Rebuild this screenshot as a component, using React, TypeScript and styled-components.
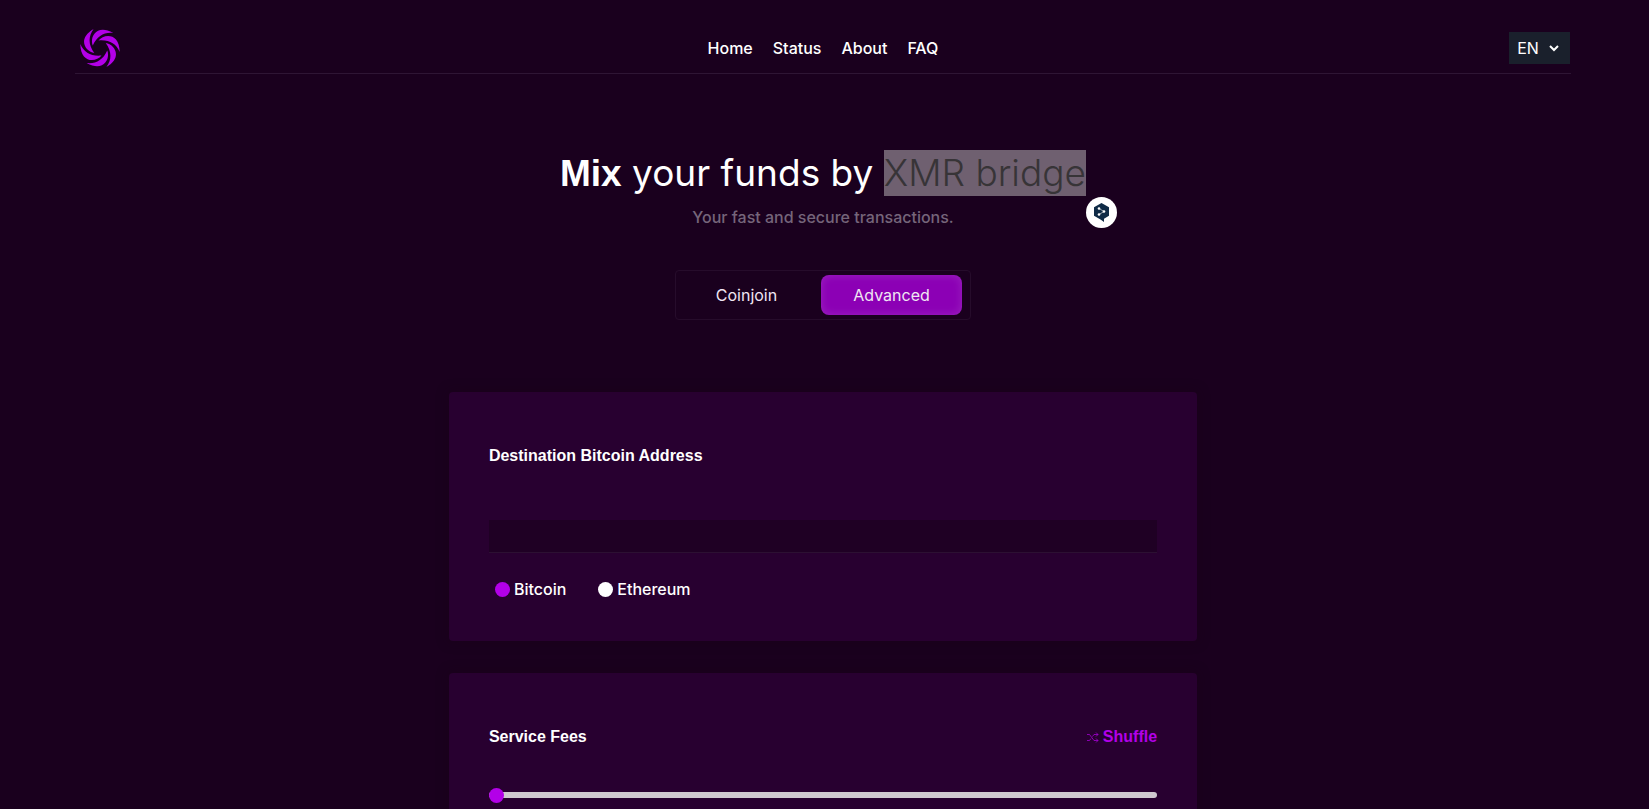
import React, { useState } from "react";
import styled, { createGlobalStyle } from "styled-components";

const accent = "#b300e8";
const display = `Inter, "Liberation Sans", sans-serif`;

const GlobalStyle = createGlobalStyle`
  *, *::before, *::after { box-sizing: border-box; }
  html { background: #1a001e; }
  body {
    margin: 0;
    height: 100vh;
    overflow: hidden;
    background: #1a001e;
    color: #fff;
    font: 16px/24px ${display};
  }
`;

const Page = styled.div`
  display: flex;
  flex-direction: column;
  align-items: center;
  padding: 24px 3px 0 0;
`;

const Header = styled.header`
  width: calc(100% / 1.1);
  height: 50px;
  display: grid;
  grid-template-columns: 1fr auto 1fr;
  align-items: center;
  padding-bottom: 2px;
  border-bottom: 1px solid #2e1534;
`;

const LogoLink = styled.a`
  display: flex;
  padding-left: 4px;
`;

const Nav = styled.nav`
  display: flex;
  gap: 20px;
`;

const NavLink = styled.a`
  color: #fff;
  font-weight: 500;
  text-decoration: none;
`;

const Language = styled.label`
  justify-self: end;
  display: grid;
  align-items: center;
  width: 61px;
  height: 32px;
  margin-right: 1px;
  background: #1a202c;
  & > * { grid-area: 1 / 1; }
  svg { justify-self: end; margin-right: 8px; pointer-events: none; }
`;

const LanguageSelect = styled.select`
  appearance: none;
  width: 100%;
  height: 100%;
  border: 0;
  padding: 0 8px;
  background: transparent;
  color: #fff;
  font: 16px/24px ${display};
`;

const Hero = styled.section`
  display: flex;
  flex-direction: column;
  align-items: center;
  padding-top: 76px;
`;

const Title = styled.h1`
  position: relative;
  margin: 0;
  font-size: 37px;
  line-height: 46px;
  font-weight: 400;
  white-space: nowrap;
  strong { font-family: "Liberation Sans", Arial, sans-serif; }
`;

const Selected = styled.mark`
  display: inline-block;
  background: #6f6070;
  color: #373437;
  font-weight: 300;
`;

const TranslateButton = styled.button`
  position: absolute;
  left: 100%;
  top: 100%;
  display: grid;
  place-items: center;
  width: 31px;
  height: 31px;
  padding: 0;
  border: 0;
  border-radius: 50%;
  background: #fff;
`;

const Tagline = styled.p`
  margin: 8px 0 0;
  color: #75657a;
  font-weight: 500;
`;

const Modes = styled.div`
  display: flex;
  gap: 4px;
  width: 296px;
  height: 50px;
  margin-top: 41px;
  padding: 4px 8px 4px 0;
  border: 1px solid #260c2b;
  border-radius: 4px;
`;

const ModeButton = styled.button<{ $active: boolean }>`
  flex: 1;
  border: 0;
  border-radius: 8px;
  background: ${(p) => (p.$active ? "#8c00b5" : "transparent")};
  box-shadow: ${(p) => (p.$active ? "inset 0 0 10px rgba(255,255,255,.14)" : "none")};
  color: #f0e6f2;
  font: 16px/24px ${display};
`;

const Cards = styled.main`
  display: flex;
  flex-direction: column;
  gap: 32px;
  width: calc(100% / 2.2);
  margin-top: 72px;
`;

const Card = styled.section`
  padding: 52px 40px 40px;
  border-radius: 4px;
  background: #280030;
  box-shadow: 0 0 12px rgba(26, 0, 22, .5);
`;

const CardHeader = styled.div`
  display: flex;
  justify-content: space-between;
  align-items: center;
`;

const CardTitle = styled.h2`
  margin: 0;
  font: bold 16px/24px "Liberation Sans", Arial, sans-serif;
`;

const AddressInput = styled.input`
  display: block;
  width: 100%;
  height: 33px;
  margin-top: 52px;
  padding: 0 8px;
  border: 0;
  border-bottom: 1px solid #2c1032;
  background: #1f0024;
  color: #fff;
  font: 16px/24px ${display};
`;

const Options = styled.div`
  display: flex;
  gap: 32px;
  padding: 24px 0 0 6px;
`;

const Option = styled.label`
  display: flex;
  align-items: center;
  gap: 4px;
  font-weight: 500;
`;

const Radio = styled.input`
  appearance: none;
  width: 15px;
  height: 15px;
  margin: 0;
  border-radius: 50%;
  background: #fff;
  &:checked { background: ${accent}; }
`;

const ShuffleButton = styled.button`
  display: flex;
  align-items: center;
  gap: 4px;
  padding: 0;
  border: 0;
  background: none;
  color: ${accent};
  font: bold 16px/24px "Liberation Sans", Arial, sans-serif;
`;

const FeeSlider = styled.input`
  appearance: none;
  display: block;
  width: 100%;
  height: 6px;
  margin: 43px 0 0;
  border-radius: 3px;
  background: #cfc8cf;
  &::-webkit-slider-thumb {
    appearance: none;
    width: 15px;
    height: 15px;
    border-radius: 50%;
    background: ${accent};
  }
`;

function Logo() {
  return (
    <svg width="42" height="42" viewBox="0 0 42 42" fill={accent} aria-hidden="true">
      {[0, 60, 120, 180, 240, 300].map((angle) => (
        <path
          key={angle}
          transform={`rotate(${angle} 21 21)`}
          d="M19.500 13.500C25 6.500 40.500 5.500 40.700 25C37 16.500 30 12.500 19.500 13.500Z"
        />
      ))}
    </svg>
  );
}

export default function App() {
  const [mode, setMode] = useState("Advanced");
  return (
    <>
      <GlobalStyle />
      <Page>
        <Header>
          <LogoLink href="#" aria-label="Home"><Logo /></LogoLink>
          <Nav>
            {["Home", "Status", "About", "FAQ"].map((t) => (
              <NavLink key={t} href={`#${t.toLowerCase()}`}>{t}</NavLink>
            ))}
          </Nav>
          <Language>
            <LanguageSelect aria-label="Language"><option>EN</option></LanguageSelect>
            <svg width="16" height="16" viewBox="0 0 16 16" fill="none" stroke="#fff" strokeWidth="2" aria-hidden="true">
              <path d="M4 6l4 4 4-4" />
            </svg>
          </Language>
        </Header>
        <Hero>
          <Title>
            <strong>Mix</strong> your funds by <Selected>XMR bridge</Selected>
            <TranslateButton aria-label="Translate">
              <svg width="17" height="19" viewBox="0 0 17 19" aria-hidden="true">
                <path fill="#0f2b46" d="M8.500 0L16 4.300V12.700L11 15.700V19L7.500 16.500L1 12.700V4.300Z" />
                <path stroke="#fff" strokeWidth=".6" fill="none" d="M6 5.500L11 8.500L6 11.500" />
                <g fill="#fff"><circle cx="6" cy="5.500" r="1.300" /><circle cx="11" cy="8.500" r="1.300" /><circle cx="6" cy="11.500" r="1.300" /></g>
              </svg>
            </TranslateButton>
          </Title>
          <Tagline>Your fast and secure transactions.</Tagline>
          <Modes>
            {["Coinjoin", "Advanced"].map((t) => (
              <ModeButton key={t} $active={mode === t} onClick={() => setMode(t)}>{t}</ModeButton>
            ))}
          </Modes>
        </Hero>
        <Cards>
          <Card>
            <CardTitle id="address">Destination Bitcoin Address</CardTitle>
            <AddressInput type="text" aria-labelledby="address" />
            <Options>
              <Option><Radio type="radio" name="coin" defaultChecked />Bitcoin</Option>
              <Option><Radio type="radio" name="coin" />Ethereum</Option>
            </Options>
          </Card>
          <Card>
            <CardHeader>
              <CardTitle id="fees">Service Fees</CardTitle>
              <ShuffleButton>
                <svg width="13" height="11" viewBox="0 0 13 11" fill="none" stroke={accent} strokeOpacity=".7" aria-hidden="true">
                  <path d="M1 2.500H3.500L8 8.500H12M1 8.500H3.500L5 6.500M6.500 4.500L8 2.500H12M10 .5L12 2.500L10 4.500M10 6.500L12 8.500L10 10.500" />
                </svg>
                Shuffle
              </ShuffleButton>
            </CardHeader>
            <FeeSlider type="range" min="0" max="100" defaultValue="0" aria-labelledby="fees" />
          </Card>
        </Cards>
      </Page>
    </>
  );
}
